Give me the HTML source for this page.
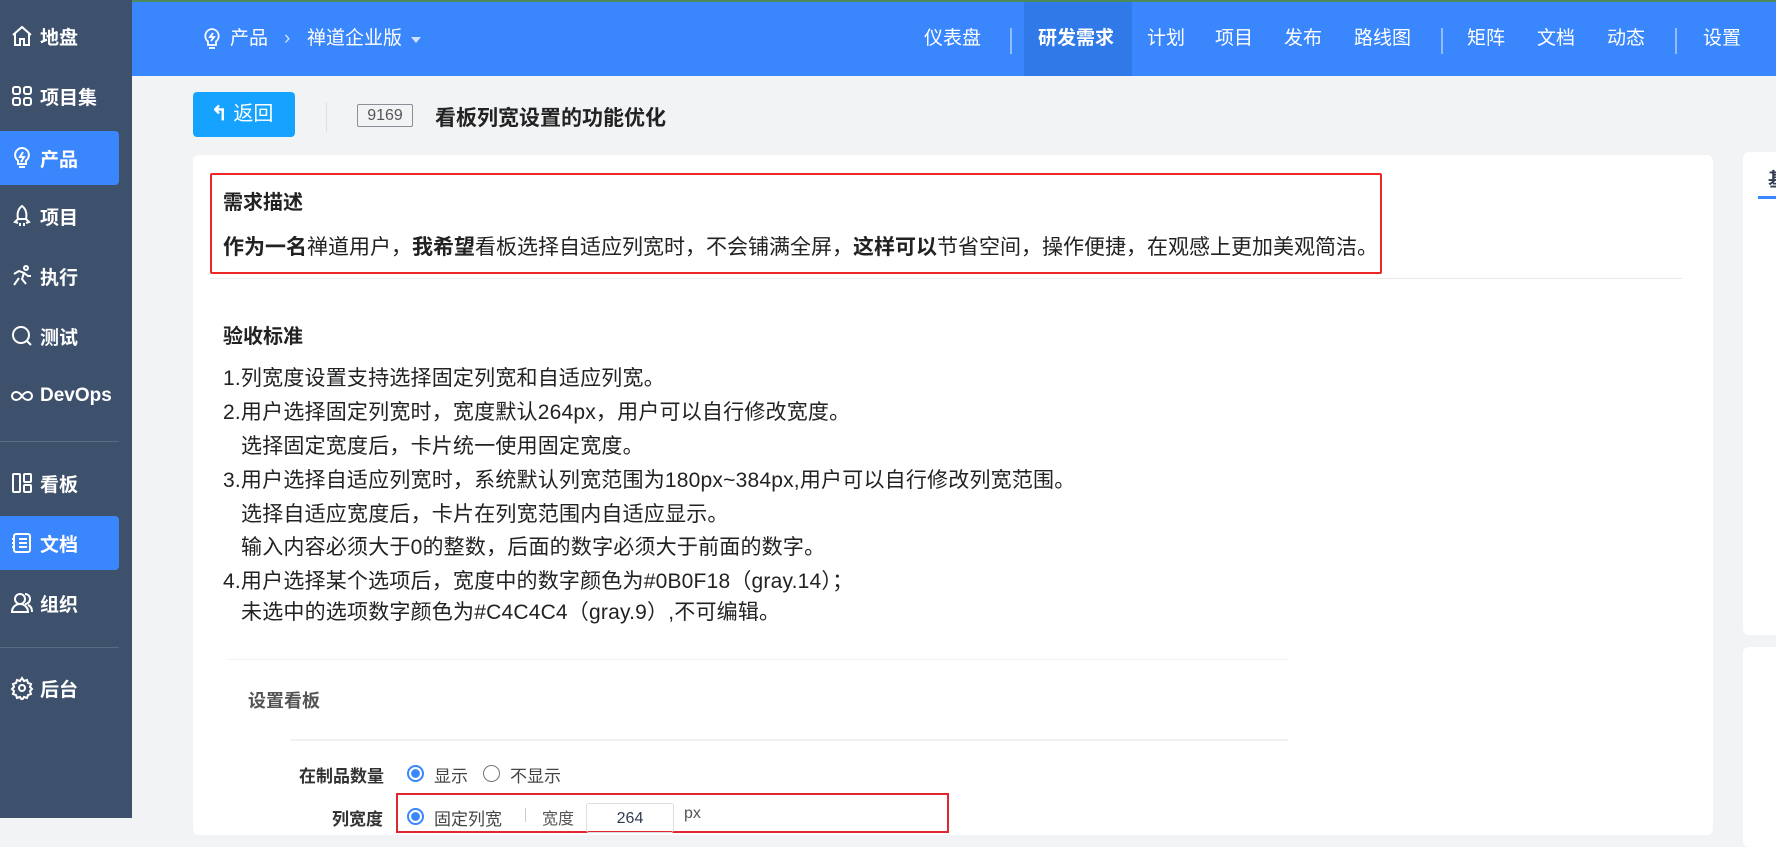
<!DOCTYPE html>
<html><head><meta charset="utf-8"><style>
*{margin:0;padding:0;box-sizing:border-box}
body{width:1776px;height:818px;overflow:hidden;background:#f2f3f5;font-family:"Liberation Sans","Noto Sans CJK SC",sans-serif;color:#313c52;position:relative}
.abs{position:absolute}
#side{left:0;top:0;width:132px;height:818px;background:#3d516c}
.si{position:absolute;left:0;width:119px;height:54px;color:#fff;font-size:19px;font-weight:bold;display:flex;align-items:center;padding-left:10px}
.si svg{width:24px;height:24px;margin-right:6px;fill:none;stroke:#fff;stroke-width:2}
.si.act{background:#3a87fd;border-radius:0 4px 4px 0}
.dv{position:absolute;left:0;width:119px;height:1px;background:#5a6c84}
#top{left:132px;top:0;width:1644px;height:76px;background:#3a87fd;border-top:2px solid #4b8a5a}
.nv{position:absolute;top:0;height:74px;line-height:74px;color:#fff;font-size:19px}
.sep{position:absolute;top:26px;width:2px;height:26px;background:rgba(255,255,255,.45)}
.card{background:#fff;border-radius:6px}
.ln{position:absolute;left:223px;font-size:21px;color:#222;white-space:nowrap}
.ls{letter-spacing:0.2px}
</style></head><body>
<div id="side" class="abs">
 <div class="si" style="top:9px"><svg viewBox="0 0 24 24"><path d="M3 11l9-8 9 8M5 9v12h5v-6h4v6h5V9"/></svg>地盘</div>
 <div class="si" style="top:69px"><svg viewBox="0 0 24 24"><rect x="3" y="3" width="7" height="7" rx="2"/><rect x="14" y="3" width="7" height="7" rx="2"/><rect x="3" y="14" width="7" height="7" rx="2"/><rect x="14" y="14" width="7" height="7" rx="2"/></svg>项目集</div>
 <div class="si act" style="top:131px"><svg viewBox="0 0 24 24"><path d="M12 2a7 7 0 0 0-4 12.7V18h8v-3.3A7 7 0 0 0 12 2zM9 21h6M13 6l-3 5h4l-3 5"/></svg>产品</div>
 <div class="si" style="top:189px"><svg viewBox="0 0 24 24"><path d="M12 2c4 3 5 8 4 13H8C7 10 8 5 12 2zM8 15l-3 3 3 1M16 15l3 3-3 1M10 19v3M14 19v3"/></svg>项目</div>
 <div class="si" style="top:249px"><svg viewBox="0 0 24 24"><circle cx="16" cy="4" r="2"/><path d="M4 10l5-3 5 2-2 6 4 5M9 14l-5 7M14 9l4 3h3"/></svg>执行</div>
 <div class="si" style="top:309px"><svg viewBox="0 0 24 24"><circle cx="11" cy="11" r="8"/><path d="M17 17l4 4"/></svg>测试</div>
 <div class="si" style="top:369px"><svg viewBox="0 0 24 24"><path d="M12 12c-2-3-4-4-6-4a4 4 0 0 0 0 8c2 0 4-1 6-4s4-4 6-4a4 4 0 0 1 0 8c-2 0-4-1-6-4z"/></svg>DevOps</div>
 <div class="dv" style="top:441px"></div>
 <div class="si" style="top:456px"><svg viewBox="0 0 24 24"><rect x="3" y="3" width="7" height="18" rx="1"/><rect x="14" y="3" width="7" height="8" rx="1"/><rect x="14" y="14" width="7" height="7" rx="1"/></svg>看板</div>
 <div class="si act" style="top:516px"><svg viewBox="0 0 24 24"><rect x="4" y="3" width="16" height="18" rx="2"/><path d="M9 8h8M9 12h8M9 16h8M2 8h3M2 12h3M2 16h3"/></svg>文档</div>
 <div class="si" style="top:576px"><svg viewBox="0 0 24 24"><circle cx="10" cy="8" r="5"/><path d="M2 21c0-5 4-8 8-8s8 3 8 8zM15 3a5 5 0 0 1 0 10M22 21c0-3-1-6-4-7"/></svg>组织</div>
 <div class="dv" style="top:647px"></div>
 <div class="si" style="top:661px"><svg viewBox="0 0 24 24"><circle cx="12" cy="12" r="3"/><path d="M12 2l2 3 3-1 1 3 3 1-1 3 2 2-2 2 1 3-3 1-1 3-3-1-2 3-2-3-3 1-1-3-3-1 1-3-2-2 2-2-1-3 3-1 1-3 3 1z"/></svg>后台</div>
</div>
<div id="top" class="abs">
 <svg class="abs" style="left:70px;top:26px" width="20" height="22" viewBox="0 0 20 22" fill="none" stroke="#fff" stroke-width="1.8"><path d="M10 1a7 7 0 0 0-4 12.5V17h8v-3.5A7 7 0 0 0 10 1zM7 20h6M11 5l-3 4h4l-3 4"/></svg>
 <div class="nv" style="left:98px">产品</div>
 <div class="nv" style="left:152px;color:#cfe0ff">›</div>
 <div class="nv" style="left:175px">禅道企业版</div>
 <div class="abs" style="left:279px;top:35px;border:5px solid transparent;border-top:6px solid #cfe0ff"></div>
 <div class="nv" style="left:792px">仪表盘</div>
 <div class="sep" style="left:878px"></div>
 <div class="abs" style="left:892px;top:0;width:108px;height:74px;background:#3079e8"></div>
 <div class="nv" style="left:906px;font-weight:bold">研发需求</div>
 <div class="nv" style="left:1015px">计划</div>
 <div class="nv" style="left:1083px">项目</div>
 <div class="nv" style="left:1152px">发布</div>
 <div class="nv" style="left:1222px">路线图</div>
 <div class="sep" style="left:1309px"></div>
 <div class="nv" style="left:1335px">矩阵</div>
 <div class="nv" style="left:1405px">文档</div>
 <div class="nv" style="left:1475px">动态</div>
 <div class="sep" style="left:1543px"></div>
 <div class="nv" style="left:1571px">设置</div>
</div>
<div class="abs" style="left:193px;top:92px;width:102px;height:45px;background:#16a3ff;border-radius:4px;color:#fff;font-size:20px;line-height:45px;padding-left:18px"><span style="font-weight:bold">↰</span> 返回</div>
<div class="abs" style="left:326px;top:102px;width:1px;height:30px;background:#dcdfe5"></div>
<div class="abs" style="left:357px;top:104px;width:56px;height:23px;border:1px solid #8a8f99;border-radius:2px;font-size:16px;color:#555;text-align:center;line-height:21px">9169</div>
<div class="abs" style="left:435px;top:102px;font-size:21px;font-weight:bold;color:#222">看板列宽设置的功能优化</div>
<div class="abs card" style="left:193px;top:155px;width:1520px;height:680px"></div>
<div class="abs card" style="left:1743px;top:152px;width:60px;height:483px"></div>
<div class="abs card" style="left:1743px;top:647px;width:60px;height:200px"></div>
<div class="abs" style="left:1768px;top:165px;font-size:19px;font-weight:bold">基</div>
<div class="abs" style="left:1758px;top:196px;width:30px;height:3px;background:#3a87fd"></div>
<div class="abs" style="left:210px;top:173px;width:1172px;height:101px;border:2px solid #f02626;border-radius:2px"></div>
<div class="ln" style="top:186px;font-weight:bold;font-size:20px">需求描述</div>
<div class="ln" style="top:231px"><b>作为一名</b>禅道用户，<b>我希望</b>看板选择自适应列宽时，不会铺满全屏，<b>这样可以</b>节省空间，操作便捷，在观感上更加美观简洁。</div>
<div class="abs" style="left:210px;top:278px;width:1472px;height:1px;background:#e8e9ec"></div>
<div class="ln" style="top:320px;font-weight:bold;font-size:20px">验收标准</div>
<div class="ln ls" style="top:362px">1.列宽度设置支持选择固定列宽和自适应列宽。</div>
<div class="ln ls" style="top:396px">2.用户选择固定列宽时，宽度默认264px，用户可以自行修改宽度。</div>
<div class="ln ls" style="top:430px;left:241px">选择固定宽度后，卡片统一使用固定宽度。</div>
<div class="ln ls" style="top:464px">3.用户选择自适应列宽时，系统默认列宽范围为180px~384px,用户可以自行修改列宽范围。</div>
<div class="ln ls" style="top:498px;left:241px">选择自适应宽度后，卡片在列宽范围内自适应显示。</div>
<div class="ln ls" style="top:531px;left:241px">输入内容必须大于0的整数，后面的数字必须大于前面的数字。</div>
<div class="ln ls" style="top:565px">4.用户选择某个选项后，宽度中的数字颜色为#0B0F18（gray.14）；</div>
<div class="ln ls" style="top:596px;left:241px">未选中的选项数字颜色为#C4C4C4（gray.9）,不可编辑。</div>
<div class="abs" style="left:227px;top:659px;width:1061px;height:1px;background:#f0f1f3"></div>
<div class="abs" style="left:248px;top:687px;font-size:18px;color:#555;font-weight:bold">设置看板</div>
<div class="abs" style="left:290px;top:739px;width:998px;height:2px;background:#f0f1f3"></div>
<div class="abs" style="left:299px;top:762px;font-size:17px;color:#333;font-weight:bold">在制品数量</div>
<div class="abs" style="left:407px;top:765px;width:17px;height:17px;border-radius:50%;border:2px solid #3a87fd;background:radial-gradient(#3a87fd 45%,#fff 50%)"></div>
<div class="abs" style="left:434px;top:762px;font-size:17px;color:#444">显示</div>
<div class="abs" style="left:483px;top:765px;width:17px;height:17px;border-radius:50%;border:1px solid #777"></div>
<div class="abs" style="left:510px;top:762px;font-size:17px;color:#444">不显示</div>
<div class="abs" style="left:396px;top:793px;width:553px;height:40px;border:2px solid #e0262e"></div>
<div class="abs" style="left:332px;top:805px;font-size:17px;color:#333;font-weight:bold">列宽度</div>
<div class="abs" style="left:407px;top:808px;width:17px;height:17px;border-radius:50%;border:2px solid #3a87fd;background:radial-gradient(#3a87fd 45%,#fff 50%)"></div>
<div class="abs" style="left:434px;top:805px;font-size:17px;color:#444">固定列宽</div>
<div class="abs" style="left:525px;top:808px;width:1px;height:14px;background:#ccc"></div>
<div class="abs" style="left:542px;top:805px;font-size:16px;color:#555">宽度</div>
<div class="abs" style="left:586px;top:803px;width:88px;height:30px;border:1px solid #ddd;border-radius:3px;text-align:center;font-size:16px;padding-top:6px">264</div>
<div class="abs" style="left:684px;top:805px;font-size:16px;color:#555">px</div>
</body></html>
